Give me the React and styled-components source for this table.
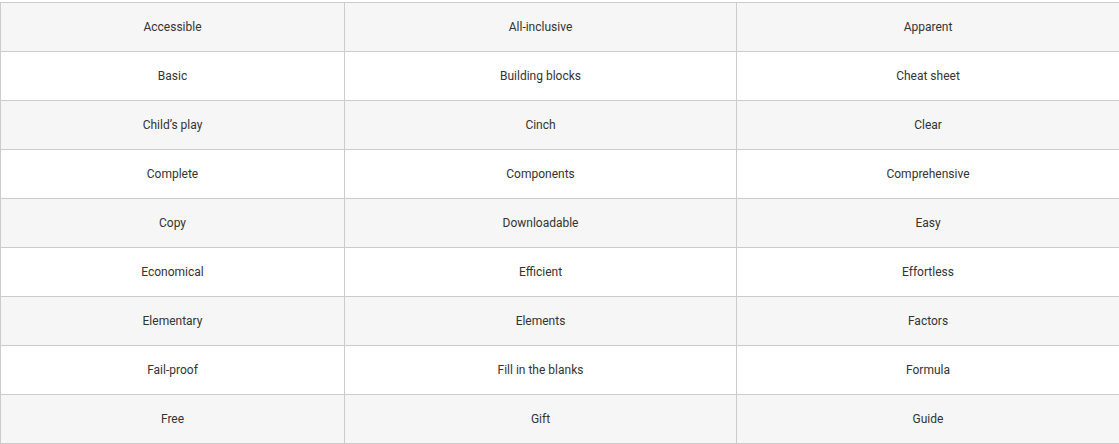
import React from 'react'
import styled, { createGlobalStyle } from 'styled-components'

const GlobalStyle = createGlobalStyle`
  body {
    margin: 0;
    padding-top: 2px;
    background: #fff;
    font-family: Roboto, "Liberation Sans", sans-serif;
  }
`

const StyledTable = styled.table`
  width: 1119px;
  table-layout: fixed;
  border-collapse: collapse;
  border: 1px solid #cccccc;
`

const StyledCol = styled.col`
  width: ${props => props.$width}px;
`

const StyledRow = styled.tr`
  background: ${props => (props.$shaded ? '#f6f6f6' : '#ffffff')};
`

const StyledCell = styled.td`
  height: 48px;
  padding: 0 8px;
  border: 1px solid #cccccc;
  text-align: center;
  vertical-align: middle;
  font-size: 12px;
  line-height: 16px;
  color: #333333;
`

const columns = [344, 392, 383]

const rows = [
  ['Accessible', 'All-inclusive', 'Apparent'],
  ['Basic', 'Building blocks', 'Cheat sheet'],
  ['Child’s play', 'Cinch', 'Clear'],
  ['Complete', 'Components', 'Comprehensive'],
  ['Copy', 'Downloadable', 'Easy'],
  ['Economical', 'Efficient', 'Effortless'],
  ['Elementary', 'Elements', 'Factors'],
  ['Fail-proof', 'Fill in the blanks', 'Formula'],
  ['Free', 'Gift', 'Guide'],
]

const App = () => {
  return (
    <>
      <GlobalStyle />
      <StyledTable>
        <colgroup>
          {columns.map((w, i) => (
            <StyledCol key={i} $width={w} />
          ))}
        </colgroup>
        <tbody>
          {rows.map((row, i) => (
            <StyledRow key={i} $shaded={i % 2 === 0}>
              {row.map(word => (
                <StyledCell key={word}>{word}</StyledCell>
              ))}
            </StyledRow>
          ))}
        </tbody>
      </StyledTable>
    </>
  )
}

export default App
